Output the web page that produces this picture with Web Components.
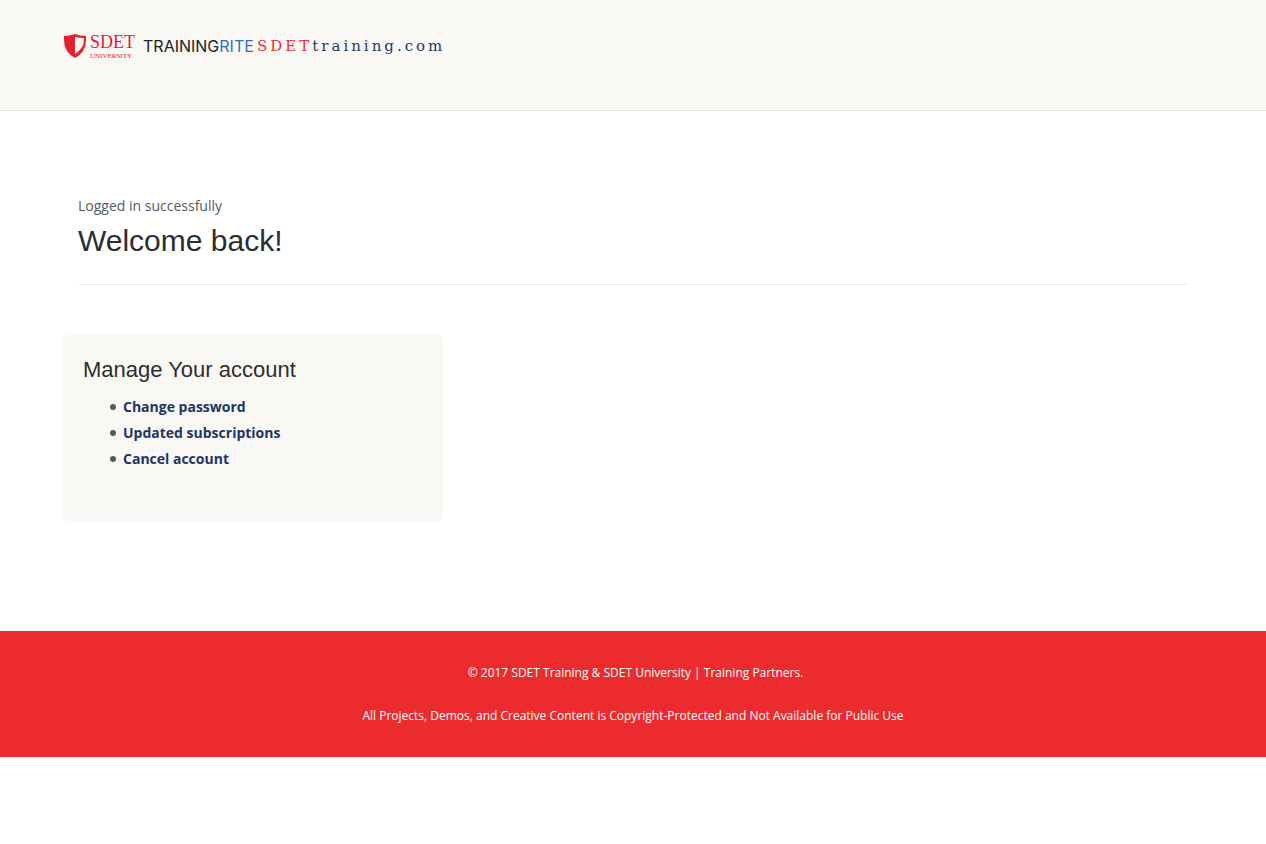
<!DOCTYPE html>
<html lang="en">
<head>
<meta charset="utf-8">
<meta name="viewport" content="width=device-width, initial-scale=1">
<title>SDET Training</title>
<style>
body { margin: 0; background: #fff; color: #555a5f; font: 14px/26px "Open Sans", sans-serif; }
</style>
</head>
<body>
<site-header></site-header>
<main>
  <page-intro>
    <span slot="status">Logged in successfully</span>
    Welcome back!
  </page-intro>
  <account-panel heading="Manage Your account"></account-panel>
</main>
<site-footer>
  <span slot="copyright">© 2017 SDET Training &amp; SDET University | Training Partners.</span>
  <span slot="notice">All Projects, Demos, and Creative Content is Copyright-Protected and Not Available for Public Use</span>
</site-footer>
<script>
function define(name, html, setup) {
  customElements.define(name, class extends HTMLElement {
    constructor() {
      super();
      this.attachShadow({ mode: "open" }).innerHTML = html;
    }
    connectedCallback() { if (setup) setup(this); }
  });
}

define("brand-logo", `
<style>
:host { display: block; }
a { display: flex; align-items: center; height: 28px; text-decoration: none; white-space: nowrap; }
svg { width: 24px; height: 24px; margin-right: 3px; flex: none; }
.uni { display: flex; flex-direction: column; width: 53px; color: #e4202f; font-family: "Liberation Serif", serif; }
.uni b { font-weight: 400; font-size: 18px; line-height: 20px; }
.uni small { font-size: 7px; line-height: 8px; }
.rite { width: 114px; font: 16px/28px "Inter", sans-serif; color: #222; }
.rite i { font-style: normal; color: #2f6fc0; }
.com { font: 15px/28px "DejaVu Serif", serif; letter-spacing: 3px; color: #1f3864; }
.com i { font-style: normal; color: #ee2b36; }
</style>
<a href="#">
  <svg viewBox="0 0 24 24" aria-hidden="true">
    <path d="M1 2Q7 2 12 0q5 2 11 2v4q0 12-11 18Q1 18 1 6z" fill="#e4202f"/>
    <path d="M12 3q4 1 9 1v2q0 8-9 14z" fill="#faf8f5"/>
  </svg>
  <span class="uni"><b>SDET</b><small>UNIVERSITY</small></span>
  <span class="rite">TRAINING<i>RITE</i></span>
  <span class="com"><i>SDET</i>training.com</span>
</a>`);

define("site-header", `
<style>
:host { display: block; background: #faf8f5; border-bottom: 1px solid #e4e3de; }
header { max-width: 1140px; margin: 0 auto; padding: 32px 0 50px; }
</style>
<header><brand-logo></brand-logo></header>`);

define("page-intro", `
<style>
:host { display: block; max-width: 1110px; margin: 0 auto; padding: 82px 15px 50px; }
p { margin: 0; }
h1 { margin: 0; padding: 2px 0 23px; font: 400 30px/40px "Liberation Sans", Arial, sans-serif; color: #2b2e31; border-bottom: 1px solid #ededed; }
</style>
<p><slot name="status"></slot></p>
<h1><slot></slot></h1>`);

define("account-panel", `
<style>
:host { display: block; max-width: 1140px; margin: 0 auto 110px; }
section { box-sizing: border-box; width: 33.333%; padding: 20px 20px 49px; background: #faf8f5; border-radius: 4px; }
h2 { margin: 0 0 10px; font: 400 22px/29px "Liberation Sans", Arial, sans-serif; color: #2b2e31; }
ul { margin: 0; padding: 0 0 0 27px; list-style: none; }
li { display: flex; align-items: center; gap: 7px; }
li::before { content: ""; width: 6px; height: 6px; border-radius: 50%; background: #555a5f; }
a { color: #1d3564; font-weight: 700; text-decoration: none; }
</style>
<section>
  <h2></h2>
  <ul>
    <li><a href="#">Change password</a></li>
    <li><a href="#">Updated subscriptions</a></li>
    <li><a href="#">Cancel account</a></li>
  </ul>
</section>`, el => { el.shadowRoot.querySelector("h2").textContent = el.getAttribute("heading"); });

define("site-footer", `
<style>
:host { display: block; background: #ec2b2e; color: #fff; font-size: 12px; line-height: 23px; text-align: center; }
footer { padding: 30px 0; }
p { margin: 0 0 20px; }
p:first-child { padding-left: 5px; }
p:last-child { margin: 0; }
</style>
<footer>
  <p><slot name="copyright"></slot></p>
  <p><slot name="notice"></slot></p>
</footer>`);
</script>
</body>
</html>
